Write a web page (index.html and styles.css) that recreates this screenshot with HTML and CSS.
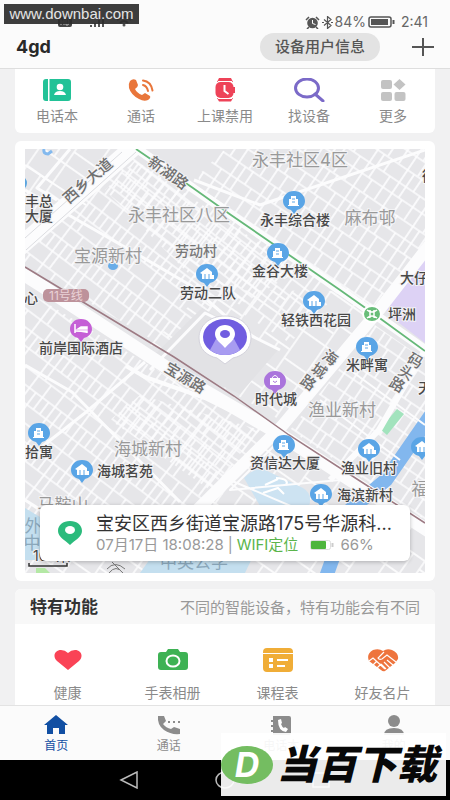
FILE: index.html
```html
<!DOCTYPE html>
<html lang="zh-CN">
<head>
    <meta charset="UTF-8">
    <meta name="viewport" content="width=device-width, initial-scale=1.0">
    <title>4gd</title>
    <link rel="stylesheet" href="styles.css">
</head>
<body>
    <div class="status-bar">
        <div class="status-left">
            <svg width="14" height="10" viewBox="0 0 14 10"><rect width="14" height="10" rx="2" fill="#444"/><path d="M3 2v6M3 5h3M6 2v6M8 2v6h2q2-3 0-6z" stroke="#bbb" fill="none"/></svg>
            <svg width="20" height="10" viewBox="0 0 20 10"><path d="M1 1h5M7 10V8M11 10V6M15 10V3M19 10V1" stroke="#555" stroke-width="2"/></svg>
            <svg width="16" height="11" viewBox="0 0 16 11"><path d="M1 4q7-6 14 0M4 7q4-4 8 0" stroke="#555" stroke-width="2" fill="none"/><circle cx="8" cy="9" r="1.5" fill="#555"/></svg>
        </div>
        <div class="status-right">
            <svg width="15" height="13" viewBox="0 0 15 13"><path d="M1 4l3-3M14 4l-3-3M4 11l-2 2M11 11l2 2" stroke="#555" stroke-width="1.5"/><circle cx="7.5" cy="7" r="5.3" fill="#555"/><path d="M7.500 4v3.500l3 1" stroke="#fff" fill="none"/></svg>
            <svg width="11" height="13" viewBox="0 0 11 13"><path d="M2 3.500l7 6-3.500 3V.5l3.500 3-7 6M0 6.500h2M9 6.500h2" stroke="#555" stroke-width="1.200" fill="none"/></svg>
            <span>84%</span>
            <svg width="27" height="12" viewBox="0 0 27 12"><rect x="1" y="1" width="22" height="10" rx="2" stroke="#555" stroke-width="1.500" fill="none"/><rect x="3" y="3" width="17" height="6" fill="#555"/><path d="M25.500 4v4" stroke="#555" stroke-width="2"/></svg>
            <span class="status-time">2:41</span>
        </div>
    </div>

    <header class="header">
        <h1 class="header-title">4gd</h1>
        <button class="info-button">设备用户信息</button>
        <button class="add-button" aria-label="添加">
            <svg width="22" height="18" viewBox="0 0 22 18"><path d="M0 9h22M11 0v18" stroke="#555" stroke-width="2"/></svg>
        </button>
    </header>

    <main class="content">
        <section class="card shortcuts">
            <button class="item">
                <svg width="28" height="24" viewBox="0 0 28 24"><path d="M3 1h2v22H3q-3 0-3-3V4q0-3 3-3zM6.500 1H25q3 0 3 3v16q0 3-3 3H6.500z" fill="#22c297"/><circle cx="17" cy="9" r="3.300" fill="#fff"/><path d="M11 17q1-4 6-4t6 4z" fill="#fff"/></svg>
                <span>电话本</span>
            </button>
            <button class="item">
                <svg width="28" height="24" viewBox="0 0 28 24"><path d="M3 3q3-3 6-1l2 5q0 2-3 4 2 4 7 6l3-2 5 3q1 2-2 4-4 2-9-1Q4 17 2 10 1 6 3 3z" fill="#e9763b"/><path d="M16 7q4 1 5 6M16 2.500q8 1 9.500 10" stroke="#e9763b" stroke-width="2" fill="none" stroke-linecap="round"/></svg>
                <span>通话</span>
            </button>
            <button class="item">
                <svg width="28" height="24" viewBox="0 0 28 24"><path d="M8 0h12l2 4H6zM6 20h16l-2 3.500H8z" fill="#ee4358"/><rect x="4.500" y="4" width="18" height="16" rx="5" fill="#ee4358"/><path d="M22 9h2v6h-2z" fill="#ee4358"/><path d="M7 3.500h14M7 20.500h14" stroke="#fff"/><path d="M13.500 7v6l4 3" stroke="#fff" stroke-width="2" fill="none"/></svg>
                <span>上课禁用</span>
            </button>
            <button class="item">
                <svg width="32" height="24" viewBox="0 0 32 24"><ellipse cx="14" cy="10" rx="11.500" ry="9" stroke="#7b6ac8" stroke-width="3" fill="none"/><path d="M22 16l8 7" stroke="#7b6ac8" stroke-width="3" stroke-linecap="round"/></svg>
                <span>找设备</span>
            </button>
            <button class="item">
                <svg width="28" height="24" viewBox="0 0 28 24" fill="#c3c3c3"><rect x="2" y="2" width="11" height="9" rx="2"/><path d="M20.500 1l6 5.500-6 5.500-6-5.500z"/><rect x="2" y="14" width="11" height="9" rx="2"/><rect x="15.500" y="14" width="11" height="9" rx="2"/></svg>
                <span>更多</span>
            </button>
        </section>

        <section class="card map-card">
            <svg class="map" viewBox="25 149 400 424" preserveAspectRatio="xMidYMid slice">
                <defs>
                    <!-- street grids -->
                    <pattern id="gridDense" width="22" height="26" patternUnits="userSpaceOnUse" patternTransform="rotate(38)">
                        <path d="M0 1h22M0 9h22M0 18h22M1 0v26M9 1v8M16 9v17M7 18v8" stroke="#fdfdfe" stroke-width="1.700" fill="none"/>
                    </pattern>
                    <pattern id="gridLong" width="36" height="44" patternUnits="userSpaceOnUse" patternTransform="rotate(34)">
                        <path d="M0 1h36M0 16h36M0 29h36M1 0v44M9 1v28M18 0v16M26 16v28M13 29v15" stroke="#fdfdfe" stroke-width="1.700" fill="none"/>
                    </pattern>
                    <pattern id="gridSlant" width="32" height="46" patternUnits="userSpaceOnUse" patternTransform="rotate(37)">
                        <path d="M0 1h32M0 16h32M0 31h32M1 0v46M9 16v30M17 1v30M25 16v15" stroke="#fdfdfe" stroke-width="1.700" fill="none"/>
                    </pattern>
                    <pattern id="gridWide" width="58" height="48" patternUnits="userSpaceOnUse" patternTransform="rotate(35)">
                        <path d="M0 1h58M0 24h32M1 0v48M32 0v48M32 34h26M18 24v24" stroke="#fafafb" stroke-width="1.800" fill="none"/>
                    </pattern>
                    <path id="pin" d="M0-10c-7 0-11 5-11 10 0 5 4 8 8 9l3 4 3-4c4-1 8-4 8-9 0-5-4-10-11-10z"/>
                    <g id="tower" fill="#fff"><path d="M-3-5h5v3h2v6h1v1H-6V4h1v-6h2z"/><path d="M-2-2h3M-2 1h3" stroke="#5aa5e6"/></g>
                    <g id="house" fill="#fff"><path d="M-7-1l7-5 5 4v7H-5V0z"/><path d="M-2 0v5M2 0v5" stroke="#5aa5e6"/><path d="M5 1h2v4H5z"/></g>
                </defs>

                <rect x="25" y="149" width="400" height="424" fill="#e6e6e9"/>
                <path d="M25 149H130L25 245z" fill="url(#gridWide)"/>
                <path d="M25 245L130 149L340 291L290 343L220 300L170 350L25 265z" fill="url(#gridSlant)"/>
                <path d="M105 190L135 160L300 270L240 305L190 275z" fill="url(#gridDense)"/>
                <path d="M195 149H425V250L370 310L200 190z" fill="url(#gridLong)"/>
                <path d="M140 149H225L190 183z" fill="#e6e6e9"/>
                <path d="M150 345L205 290L340 291L375 320L280 420z" fill="url(#gridWide)"/>
                <path d="M25 290L190 390L275 435L200 520H25z" fill="url(#gridSlant)"/>
                <path d="M140 395L260 430L210 490L110 420z" fill="url(#gridDense)"/>
                <path d="M290 430L375 325L425 360V520z" fill="url(#gridLong)"/>
                <path d="M230 460L285 440L425 530V573H25V520H200z" fill="url(#gridWide)"/>
                <path d="M148 361L202 308L278 350L240 394L190 372z" fill="#e2e2e5"/>

                <!-- areas -->
                <path d="M425 256L383 304L390 316L425 343z" fill="#ddd2f5"/>
                <path d="M380 429L397 409L404 414L387 435z" fill="#a2e3bd"/>
                <path d="M244 478q10-10 19-9l40 19q10 6 6 18h-49z" fill="#cde3f2"/>
                <path d="M25 508l20 12v40H25zM155 552h100l-10 21H140z" fill="#c4dfef"/>
                <path d="M433 412L386 480L350 510L326 577" stroke="#82b7ee" stroke-width="14" fill="none"/>
                <ellipse cx="113" cy="266" rx="5" ry="4" fill="#68ace8"/>
                <path d="M44 149q-1 5 4 5l4-3" stroke="#83b9ee" stroke-width="3" fill="none"/>
                <path d="M25 178q4 5 0 10z" fill="#5ca5df"/>
                <path d="M36 568h9l5 5H36z" fill="#b4e8a5"/>
                <path d="M265 485l13-6M263 493l15-5 6 6M276 478q14 1 10 7" stroke="#fff" stroke-width="2" fill="none"/>

                <!-- main roads -->
                <g fill="none" stroke="#fcfcfd" stroke-linejoin="round">
                    <path d="M15 251L136 145" stroke-width="18"/>
                    <path d="M132 145L194 189L340 290L430 353" stroke-width="9"/>
                    <path d="M15 269L45 288L178 375L281 435L430 532" stroke-width="13"/>
                    <path d="M431 243L379 310L282 426L194 513" stroke-width="12"/>
                    <path d="M425 350L379 430L330 480" stroke-width="6"/>
                    <path d="M280 435L205 398L145 377L126 366" stroke-width="4"/>
                    <path d="M25 190L130 250L190 285L237 326M194 180L260 205L425 150M150 370L205 313L280 350M25 365L72 392L180 502M145 362L85 413L25 460M70 149L37 188L57 200M25 500L65 525" stroke-width="3"/>
                    <path d="M230 480L300 510M280 440L230 490L340 480M350 370L425 425M320 400L400 460M25 165L86 205" stroke-width="2"/>
                </g>
                <path d="M26 250L136 152M25 238L122 152" stroke="#dcdde1" fill="none"/>
                <path d="M136 149L193 188L231 215L340 290L374 314L425 351" stroke="#65b878" stroke-width="1.800" fill="none"/>
                <path d="M25 267L78 299L174 357L234 396L289 435L360 481L425 523" stroke="#9d7b84" stroke-width="1.500" fill="none"/>

                <g class="area">
                    <text x="300" y="166">永丰社区4区</text>
                    <text x="179" y="221">永丰社区八区</text>
                    <text x="370" y="224">麻布邨</text>
                    <text x="108" y="262">宝源新村</text>
                    <text x="342" y="416">渔业新村</text>
                    <text x="148" y="455">海城新村</text>
                    <text x="63" y="511">马鞍山</text>
                    <text x="420" y="495">福</text>
                    <text class="water" x="194" y="568">中英公学</text>
                    <text class="water" x="33" y="532">外</text>
                    <text class="water" x="32" y="549">中</text>
                </g>
                <g class="road">
                    <text x="88" y="186" transform="rotate(-41 88 181)">西乡大道</text>
                    <text x="168" y="178" transform="rotate(35 168 173)">新湖路</text>
                    <text x="185" y="383" transform="rotate(31 185 378)">宝源路</text>
                    <text transform="translate(330 358) rotate(35)" y="5">海</text>
                    <text transform="translate(319 371) rotate(35)" y="5">城</text>
                    <text transform="translate(308 383) rotate(35)" y="5">路</text>
                    <text transform="translate(415 361) rotate(30)" y="5">码</text>
                    <text transform="translate(406 373) rotate(30)" y="5">头</text>
                    <text transform="translate(397 385) rotate(30)" y="5">路</text>
                </g>
                <g class="place">
                    <text x="39" y="206">丰总</text>
                    <text x="39" y="221">大厦</text>
                    <text class="village" x="196" y="256">劳动村</text>
                    <text x="295" y="225">永丰综合楼</text>
                    <text x="280" y="276">金谷大楼</text>
                    <text x="208" y="298">劳动二队</text>
                    <text x="316" y="325">轻铁西花园</text>
                    <text x="402" y="319">坪洲</text>
                    <text x="414" y="283">大仔</text>
                    <text x="367" y="370">米畔寓</text>
                    <text x="276" y="404">时代城</text>
                    <text x="81" y="353">前岸国际酒店</text>
                    <text x="31" y="303">心</text>
                    <text x="39" y="457">拾寓</text>
                    <text x="125" y="476">海城茗苑</text>
                    <text x="285" y="468">资信达大厦</text>
                    <text x="369" y="473">渔业旧村</text>
                    <text x="365" y="500">海滨新村</text>
                    <text x="425" y="393">天</text>
                    <text x="429" y="181">街</text>
                </g>

                <rect x="43" y="289" width="46" height="13" rx="5" fill="#bd929b"/>
                <text class="metro" x="66" y="300">11号线</text>
                <ellipse cx="372" cy="314" rx="9" ry="8" fill="#68bd79" stroke="#fff" stroke-width="2"/>
                <path d="M367 310q5 4 10 0M367 318q5-4 10 0M370 310v8M374 310v8" stroke="#fff" stroke-width="1.500" fill="none"/>

                <g fill="#5aa5e6">
                    <use href="#pin" x="294" y="201"/><use href="#pin" x="278" y="253"/><use href="#pin" x="207" y="274"/>
                    <use href="#pin" x="314" y="301"/><use href="#pin" x="367" y="347"/><use href="#pin" x="39" y="433"/>
                    <use href="#pin" x="82" y="470"/><use href="#pin" x="284" y="445"/><use href="#pin" x="369" y="449"/>
                    <use href="#pin" x="321" y="494"/><use href="#pin" x="422" y="447"/>
                </g>
                <use href="#pin" x="275" y="381" fill="#aa74dc"/>
                <use href="#pin" x="81" y="329" fill="#c55fd6"/>
                <use href="#tower" x="294" y="201"/><use href="#tower" x="278" y="253"/><use href="#tower" x="367" y="347"/>
                <use href="#tower" x="39" y="433"/><use href="#tower" x="284" y="445"/>
                <use href="#house" x="207" y="274"/><use href="#house" x="314" y="301"/><use href="#house" x="82" y="470"/>
                <use href="#house" x="369" y="449"/><use href="#house" x="321" y="494"/><use href="#house" x="422" y="447"/>
                <path d="M270 378h10v7h-10z" fill="#fff"/><path d="M272 378q3-5 6 0" stroke="#fff" fill="none"/><path d="M273 381q2 3 4 0" stroke="#aa74dc" fill="none"/>
                <path d="M75 324v9M75 331h12v2M78 329h9v-2h-6z" stroke="#fff" stroke-width="1.500" fill="#fff"/>

                <!-- watch position -->
                <path d="M225 316c-16 0-26 10-26 22 0 11 8 18 18 20l8 6 8-6c10-2 18-9 18-20 0-12-10-22-26-22z" fill="#fff" stroke="#d3d2dc"/>
                <ellipse cx="225" cy="337" rx="22" ry="18" fill="#705de0"/>
                <path d="M210 350l6-11h18l6 11q-6 5-15 5t-15-5z" fill="#a89cf1"/>
                <path d="M225 325c-6 0-10 4-10 9 0 6 6 9 10 14 4-5 10-8 10-14 0-5-4-9-10-9z" fill="#fff"/>
                <ellipse cx="225" cy="334" rx="5" ry="4" fill="#705de0"/>

                <text class="scale" x="33" y="561">100米</text>
                <path d="M29 563v3h38v-3" stroke="#333" stroke-width="1.500" fill="none"/>
                <path d="M107 569q8-9 18 0M109 573q7-9 14 0M112 562l8 8" stroke="#777" fill="none"/>
            </svg>

            <div class="location">
                <svg class="location-icon" width="24" height="24" viewBox="0 0 24 24"><path d="M12 0C5 0 0 4 0 10c0 6 7 9 12 14 5-5 12-8 12-14C24 4 19 0 12 0z" fill="#2bbb7c"/><ellipse cx="12" cy="9" rx="5" ry="4" fill="#fff"/></svg>
                <div class="location-body">
                    <div class="location-address">宝安区西乡街道宝源路175号华源科...</div>
                    <div class="location-meta">
                        <span>07月17日 18:08:28</span>
                        <span>|</span>
                        <span class="location-type">WIFI定位</span>
                        <svg class="battery" width="24" height="10" viewBox="0 0 24 10"><rect x=".5" y=".5" width="20" height="9" rx="2" fill="#fff" stroke="#ddd"/><rect x="1" y="1" width="15" height="8" rx="1" fill="#4eb53d"/><path d="M22.500 3v4" stroke="#ccc" stroke-width="2"/></svg>
                        <span>66%</span>
                    </div>
                </div>
            </div>
        </section>

        <section class="card features">
            <div class="features-head">
                <h2 class="features-title">特有功能</h2>
                <span class="features-note">不同的智能设备，特有功能会有不同</span>
            </div>
            <div class="features-list">
                <button class="item">
                    <svg width="28" height="26" viewBox="0 0 28 26"><path d="M14 23L3 14C-2 9 1 3 7 3q4 0 7 3 3-3 7-3c6 0 9 6 4 11z" fill="#fa4356"/></svg>
                    <span>健康</span>
                </button>
                <button class="item">
                    <svg width="32" height="26" viewBox="0 0 32 26"><path d="M4 5h5l2-3h10l2 3h5q3 0 3 3v12q0 3-3 3H4q-3 0-3-3V8q0-3 3-3z" fill="#3eb254"/><ellipse cx="16" cy="14" rx="6.500" ry="5.500" stroke="#fff" stroke-width="2" fill="none"/></svg>
                    <span>手表相册</span>
                </button>
                <button class="item">
                    <svg width="32" height="26" viewBox="0 0 32 26"><path d="M1 5q0-4 4-4h22q4 0 4 4v1H1zM1 7h30v14q0 4-4 4H5q-4 0-4-4z" fill="#f0ad37"/><path d="M7 13h4M7 19h4" stroke="#fff" stroke-width="4"/><path d="M15 13h11M15 19h8" stroke="#fff" stroke-width="2"/></svg>
                    <span>课程表</span>
                </button>
                <button class="item">
                    <svg width="32" height="26" viewBox="0 0 32 26"><path d="M16 4q4-3 9-1 7 3 6 9l-3 4-10 8q-2 1-4-1L2 14q-3-7 4-11 6-2 10 1z" fill="#ee743d"/><path d="M29 15l-9-7-5 4q-3 1-4-1l6-6M20 13l6 5M17 15l6 6M14 17l5 5M2 14l4-3 12 11M6 18l4-4M10 21l4-4" stroke="#fff" stroke-width="1.200" fill="none"/></svg>
                    <span>好友名片</span>
                </button>
            </div>
        </section>
    </main>

    <nav class="tabs">
        <a class="tab active" href="#home">
            <svg width="24" height="20" viewBox="0 0 24 20"><path d="M12 0l12 10h-3v9h-6v-6H9v6H3v-9H0z" fill="#114fa3"/></svg>
            <span>首页</span>
        </a>
        <a class="tab" href="#call">
            <svg width="24" height="20" viewBox="0 0 24 20"><path d="M1 1h6l2 5-3 3q3 4 8 5l3-2 6 2v5q-9 1-16-4T1 1z" fill="#8c8c8c"/><path d="M11 7h2M16 7h2M21 7h2" stroke="#8c8c8c" stroke-width="2"/></svg>
            <span>通话</span>
        </a>
        <a class="tab" href="#contacts">
            <svg width="24" height="20" viewBox="0 0 24 20"><path d="M4 1h16q2 0 2 2v15q0 2-2 2H4v-3H2v-2h2v-3H2v-2h2V7H2V5h2z" fill="#8c8c8c"/><path d="M9 5l3-1 1 4-1 1q1 3 3 4l1-1 3 2-2 3Q9 16 9 5z" fill="#fff"/></svg>
            <span>电话本</span>
        </a>
        <a class="tab" href="#me">
            <svg width="24" height="20" viewBox="0 0 24 20"><ellipse cx="12" cy="6" rx="6" ry="6" fill="#8c8c8c"/><path d="M2 20q0-7 10-7t10 7z" fill="#8c8c8c"/></svg>
            <span>我的</span>
        </a>
    </nav>

    <div class="system-nav">
        <svg width="20" height="18" viewBox="0 0 20 18"><path d="M2 9l16-8v16z" stroke="#bbb" stroke-width="1.500" fill="none"/></svg>
        <svg width="20" height="18" viewBox="0 0 20 18"><ellipse cx="10" cy="9" rx="9" ry="8" stroke="#bbb" stroke-width="1.500" fill="none"/></svg>
        <svg width="20" height="18" viewBox="0 0 20 18"><rect x="2" y="2" width="16" height="14" stroke="#bbb" stroke-width="1.500" fill="none"/></svg>
    </div>

    <div class="site-mark">www.downbai.com</div>
    <div class="brand-mark">
        <span class="brand-logo">D</span>
        <span class="brand-name">当百下载</span>
    </div>
</body>
</html>
```
FILE: styles.css
```css
* {
    margin: 0;
    padding: 0;
    box-sizing: border-box;
}

body {
    display: flex;
    flex-direction: column;
    position: relative;
    height: 100vh;
    overflow: hidden;
    background: #f1f1f2;
    color: #333;
    font-family: Inter, "Noto Sans CJK SC", sans-serif;
    font-size: 14px;
}

button {
    border: none;
    background: none;
    font: inherit;
    color: inherit;
    cursor: pointer;
}

svg {
    display: block;
    flex-shrink: 0;
}

.status-bar {
    display: flex;
    justify-content: space-between;
    align-items: flex-end;
    height: 32px;
    padding: 0 22px 0 58px;
    background: #fbfbfb;
}

.status-left,
.status-right {
    display: flex;
    align-items: center;
    gap: 2px;
    color: #666;
}

.status-left {
    gap: 12px;
    padding-bottom: 5px;
}

.status-right {
    line-height: 20px;
}

.status-time {
    margin-left: 4px;
}

.header {
    display: flex;
    align-items: center;
    height: 37px;
    padding: 0 16px 7px;
    background: #fbfbfb;
    border-bottom: 1px solid #dedede;
}

.header-title {
    flex: 1;
    font-size: 18px;
    font-weight: 700;
    line-height: 28px;
    color: #292929;
}

.info-button {
    height: 28px;
    padding: 0 15px;
    border-radius: 14px;
    background: #e3e3e3;
    color: #555;
    font-size: 15px;
    font-weight: 500;
    line-height: 28px;
}

.add-button {
    margin-left: 32px;
}

.content {
    display: flex;
    flex-direction: column;
    flex: 1;
    gap: 8px;
    min-height: 0;
    padding: 0 15px;
    overflow: hidden;
}

.card {
    flex-shrink: 0;
    border-radius: 6px;
    background: #fff;
}

.item {
    display: flex;
    flex: 1;
    flex-direction: column;
    align-items: center;
    color: #8a8a8a;
    line-height: 20px;
}

.shortcuts {
    display: flex;
    padding: 9px 0 7px;
    border-radius: 0 0 6px 6px;
}

.shortcuts .item {
    gap: 4px;
}

.map-card {
    position: relative;
    padding: 8px 10px;
}

.map {
    width: 100%;
    height: auto;
}

.map text {
    text-anchor: middle;
    paint-order: stroke;
    stroke: #f3f3f5;
    stroke-width: 2px;
    font-size: 14px;
}

.map .area text {
    fill: #999;
    font-size: 17px;
}

.map .area .water {
    fill: #8ba8bb;
    stroke: none;
}

.map .road text {
    fill: #707070;
    font-size: 15px;
    font-weight: 500;
}

.map .place text {
    fill: #484848;
    font-weight: 500;
}

.map .place .village {
    fill: #777;
}

.map .metro {
    fill: #ead2d7;
    stroke: none;
    font-size: 12px;
}

.map .scale {
    fill: #444;
    text-anchor: start;
}

.location {
    position: absolute;
    right: 25px;
    bottom: 20px;
    left: 25px;
    display: flex;
    align-items: center;
    gap: 14px;
    height: 56px;
    padding: 0 18px;
    border-radius: 6px;
    background: #fff;
    box-shadow: 0 1px 4px rgba(0, 0, 0, 0.25);
}

.location-body {
    min-width: 0;
}

.location-address {
    overflow: hidden;
    font-size: 18px;
    line-height: 24px;
    white-space: nowrap;
}

.location-meta {
    display: flex;
    align-items: center;
    gap: 4px;
    color: #999;
    font-size: 15px;
    line-height: 18px;
    white-space: nowrap;
}

.location-type {
    color: #5bb54b;
}

.battery {
    margin: 0 2px 0 8px;
}

.features-head {
    display: flex;
    justify-content: space-between;
    align-items: center;
    height: 35px;
    padding: 0 15px;
    border-radius: 6px 6px 0 0;
    background: #f8f8f8;
}

.features-title {
    font-size: 17px;
    font-weight: 700;
    line-height: 24px;
}

.features-note {
    color: #999;
    font-size: 15px;
}

.features-list {
    display: flex;
    padding: 23px 0;
}

.features-list .item {
    gap: 10px;
}

.tabs {
    display: flex;
    height: 55px;
    border-top: 1px solid #e3e3e3;
    background: #fbfbfb;
}

.tab {
    display: flex;
    flex: 1;
    flex-direction: column;
    align-items: center;
    gap: 2px;
    padding-top: 9px;
    color: #8c8c8c;
    font-size: 12px;
    line-height: 18px;
    text-decoration: none;
}

.tab.active {
    color: #114fa3;
}

.system-nav {
    display: flex;
    justify-content: center;
    align-items: center;
    gap: 76px;
    height: 40px;
    background: #000;
}

.site-mark {
    position: absolute;
    top: 4px;
    left: 4px;
    width: 135px;
    background: rgba(45, 45, 45, 0.92);
    color: #e5e5e5;
    font-family: "Liberation Sans", sans-serif;
    font-size: 15px;
    line-height: 20px;
    text-align: center;
}

.brand-mark {
    position: absolute;
    right: 4px;
    bottom: 4px;
    display: flex;
    align-items: center;
    gap: 4px;
    width: 225px;
    height: 63px;
    background: rgba(255, 255, 255, 0.92);
    color: #080808;
}

.brand-logo {
    width: 52px;
    height: 38px;
    border-radius: 50%;
    background: #74bd61;
    color: #fff;
    font-size: 34px;
    font-style: italic;
    font-weight: 700;
    line-height: 38px;
    text-align: center;
}

.brand-name {
    font-size: 40px;
    font-style: italic;
    font-weight: 900;
    line-height: 44px;
    white-space: nowrap;
}
```
